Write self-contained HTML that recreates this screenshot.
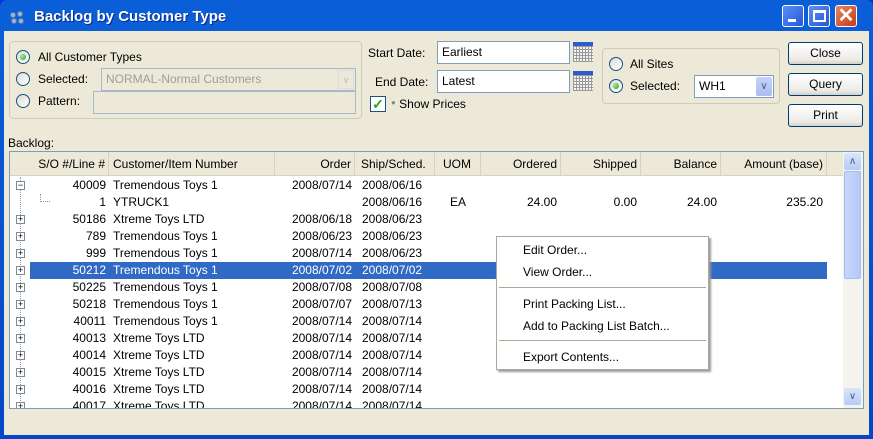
<!DOCTYPE html>
<html><head><style>
*{box-sizing:border-box;margin:0;padding:0}
body{width:873px;height:439px;overflow:hidden;font-family:"Liberation Sans",sans-serif;font-size:12px;color:#000;background:#0831d9}
.a{position:absolute;white-space:nowrap}
#win{position:absolute;left:0;top:0;width:873px;height:439px;background:linear-gradient(#0a5fd8,#0447c9);border-radius:7px 7px 0 0}
.title{left:34px;top:8px;color:#fff;font-weight:bold;font-size:15px;text-shadow:1px 1px #0a2a8a}
.tb{position:absolute;top:5px;width:22px;height:22px;border:1px solid #fff;border-radius:3px;background:linear-gradient(135deg,#5d8ef5,#2258d8)}
.grp{position:absolute;border:1px solid #cfcbb8;border-radius:4px}
.rad{position:absolute;width:14px;height:14px;border-radius:50%;border:1px solid #1c5180;background:linear-gradient(135deg,#dcdcd4,#fff)}
.rad.on::after{content:"";position:absolute;left:3px;top:3px;width:6px;height:6px;border-radius:50%;background:radial-gradient(circle at 35% 35%,#9ef08a,#21a121)}
.fld{position:absolute;border:1px solid #7f9db9;background:#fff;padding:3px 0 0 4px}
.btn{position:absolute;width:75px;height:23px;border:1px solid #003c74;border-radius:3px;background:linear-gradient(#fff,#ecebe6 80%,#d6d0c5);text-align:center;line-height:21px}
.cal{position:absolute;width:20px;height:20px;background:repeating-linear-gradient(90deg,#999 0 1px,transparent 1px 3px),repeating-linear-gradient(0deg,#999 0 1px,#f4f4f4 1px 3px);border-top:4px solid #2a5cd0}
.r{position:absolute;left:0;width:833px;height:17px;line-height:17px}
.r span{position:absolute}
.c1{right:737px;text-align:right}
.c2{left:103px}
.c3{right:491px}
.c4{left:352px}
.pl{position:absolute;left:6px;top:4px;width:9px;height:9px;border:1px solid #7a8a99;background:#fff;font-size:9px;line-height:7px;text-align:center;color:#000}
.hd{position:absolute;top:0;height:24px;line-height:24px;border-right:1px solid #d6d2c2}
.mi{position:absolute;left:26px}
</style></head><body>
<div id="win">
<svg class="a" style="left:9px;top:11px" width="16" height="14"><g fill="#9db4d8" stroke="#5a7aa8"><circle cx="4" cy="4" r="2.5"/><circle cx="11" cy="3" r="2.5"/><circle cx="5" cy="10" r="2.5"/><circle cx="12" cy="10" r="2.5"/></g></svg>
<div class="a title">Backlog by Customer Type</div>
<div class="tb" style="left:782px"><div style="position:absolute;left:5px;top:13px;width:8px;height:3px;background:#fff"></div></div>
<div class="tb" style="left:808px"><div style="position:absolute;left:4px;top:4px;width:13px;height:12px;border:2px solid #fff;border-top-width:3px"></div></div>
<div class="tb" style="left:835px;background:linear-gradient(135deg,#e8855e,#c63d17)"><div style="position:absolute;left:0;top:0;width:20px;height:20px;color:#fff;font-size:20px;line-height:20px;text-align:center;font-weight:bold">✕</div></div>
</div>
<div style="position:absolute;left:4px;top:31px;width:865px;height:404px;background:#ECE9D8"></div>
<div class="grp" style="left:9px;top:41px;width:353px;height:78px"></div>
<div class="rad on" style="left:16px;top:50px"></div><div class="a" style="left:38px;top:50px">All Customer Types</div>
<div class="rad" style="left:16px;top:72px"></div><div class="a" style="left:38px;top:72px">Selected:</div>
<div class="rad" style="left:16px;top:94px"></div><div class="a" style="left:38px;top:94px">Pattern:</div>
<div class="fld" style="left:101px;top:68px;width:255px;height:23px;background:#ECE9D8;color:#a09e94;border-color:#a9b7c9">NORMAL-Normal Customers<div style="position:absolute;right:1px;top:1px;width:16px;height:19px;border:1px solid #ddd;color:#bbb;text-align:center;font-size:9px;line-height:19px">&#8744;</div></div>
<div class="fld" style="left:93px;top:91px;width:263px;height:23px;background:#ECE9D8;border-color:#a9b7c9"></div>
<div class="a" style="left:368px;top:46px">Start Date:</div>
<div class="fld" style="left:437px;top:41px;width:133px;height:23px">Earliest</div>
<div class="cal" style="left:573px;top:42px"></div>
<div class="a" style="left:375px;top:75px">End Date:</div>
<div class="fld" style="left:437px;top:70px;width:133px;height:23px">Latest</div>
<div class="cal" style="left:573px;top:71px"></div>
<div style="position:absolute;left:370px;top:96px;width:16px;height:16px;border:1px solid #1c5180;background:#fff;color:#21a121;font-weight:bold;font-size:14px;line-height:14px;text-align:center">✓</div>
<div class="a" style="left:391px;top:97px"><span style="font-size:8px;color:#888;vertical-align:3px">●</span> Show Prices</div>
<div class="grp" style="left:602px;top:48px;width:178px;height:56px"></div>
<div class="rad" style="left:609px;top:57px"></div><div class="a" style="left:630px;top:57px">All Sites</div>
<div class="rad on" style="left:609px;top:79px"></div><div class="a" style="left:630px;top:79px">Selected:</div>
<div class="fld" style="left:694px;top:75px;width:80px;height:23px">WH1<div style="position:absolute;right:1px;top:1px;width:16px;height:19px;background:linear-gradient(#c6d3f7,#a8bdf0);color:#4d6185;text-align:center;font-size:10px;line-height:19px;border-radius:2px">&#8744;</div></div>
<div class="btn" style="left:788px;top:42px">Close</div>
<div class="btn" style="left:788px;top:73px">Query</div>
<div class="btn" style="left:788px;top:104px">Print</div>
<div class="a" style="left:8px;top:136px">Backlog:</div>
<div style="position:absolute;left:9px;top:151px;width:855px;height:258px;border:1px solid #7f9db9;background:#fff;overflow:hidden">
 <div style="position:absolute;left:0;top:0;width:833px;height:24px;background:#ECE9D8;border-bottom:1px solid #d6d2c2">
  <div class="hd" style="left:0;width:99px;text-align:right;padding-right:3px">S/O #/Line #</div>
  <div class="hd" style="left:99px;width:166px;padding-left:4px">Customer/Item Number</div>
  <div class="hd" style="left:265px;width:80px;text-align:right;padding-right:3px">Order</div>
  <div class="hd" style="left:345px;width:80px;padding-left:6px">Ship/Sched.</div>
  <div class="hd" style="left:425px;width:46px;padding-left:8px">UOM</div>
  <div class="hd" style="left:471px;width:80px;text-align:right;padding-right:3px">Ordered</div>
  <div class="hd" style="left:551px;width:80px;text-align:right;padding-right:3px">Shipped</div>
  <div class="hd" style="left:631px;width:80px;text-align:right;padding-right:3px">Balance</div>
  <div class="hd" style="left:711px;width:106px;text-align:right;padding-right:3px">Amount (base)</div>
 </div>
 <div style="position:absolute;left:10px;top:25px;height:240px;border-left:1px dotted #999"></div>
 <div class="r" style="top:25px"><div class="pl">−</div><span class="c1">40009</span><span class="c2">Tremendous Toys 1</span><span class="c3">2008/07/14</span><span class="c4">2008/06/16</span></div>
 <div class="r" style="top:42px"><span style="left:30px;top:0;width:10px;height:8px;border-left:1px dotted #999;border-bottom:1px dotted #999"></span><span class="c1">1</span><span class="c2">YTRUCK1</span><span class="c4">2008/06/16</span><span style="left:440px">EA</span><span style="right:286px">24.00</span><span style="right:206px">0.00</span><span style="right:126px">24.00</span><span style="right:20px">235.20</span></div>
 <div class="r" style="top:59px"><div class="pl">+</div><span class="c1">50186</span><span class="c2">Xtreme Toys LTD</span><span class="c3">2008/06/18</span><span class="c4">2008/06/23</span></div>
 <div class="r" style="top:76px"><div class="pl">+</div><span class="c1">789</span><span class="c2">Tremendous Toys 1</span><span class="c3">2008/06/23</span><span class="c4">2008/06/23</span></div>
 <div class="r" style="top:93px"><div class="pl">+</div><span class="c1">999</span><span class="c2">Tremendous Toys 1</span><span class="c3">2008/07/14</span><span class="c4">2008/06/23</span></div>
 <div class="r" style="top:110px"><div style="position:absolute;left:20px;top:0;width:797px;height:17px;background:#316AC5"></div><div class="pl">+</div><span class="c1" style="color:#fff">50212</span><span class="c2" style="color:#fff">Tremendous Toys 1</span><span class="c3" style="color:#fff">2008/07/02</span><span class="c4" style="color:#fff">2008/07/02</span></div>
 <div class="r" style="top:127px"><div class="pl">+</div><span class="c1">50225</span><span class="c2">Tremendous Toys 1</span><span class="c3">2008/07/08</span><span class="c4">2008/07/08</span></div>
 <div class="r" style="top:144px"><div class="pl">+</div><span class="c1">50218</span><span class="c2">Tremendous Toys 1</span><span class="c3">2008/07/07</span><span class="c4">2008/07/13</span></div>
 <div class="r" style="top:161px"><div class="pl">+</div><span class="c1">40011</span><span class="c2">Tremendous Toys 1</span><span class="c3">2008/07/14</span><span class="c4">2008/07/14</span></div>
 <div class="r" style="top:178px"><div class="pl">+</div><span class="c1">40013</span><span class="c2">Xtreme Toys LTD</span><span class="c3">2008/07/14</span><span class="c4">2008/07/14</span></div>
 <div class="r" style="top:195px"><div class="pl">+</div><span class="c1">40014</span><span class="c2">Xtreme Toys LTD</span><span class="c3">2008/07/14</span><span class="c4">2008/07/14</span></div>
 <div class="r" style="top:212px"><div class="pl">+</div><span class="c1">40015</span><span class="c2">Xtreme Toys LTD</span><span class="c3">2008/07/14</span><span class="c4">2008/07/14</span></div>
 <div class="r" style="top:229px"><div class="pl">+</div><span class="c1">40016</span><span class="c2">Xtreme Toys LTD</span><span class="c3">2008/07/14</span><span class="c4">2008/07/14</span></div>
 <div class="r" style="top:246px"><div class="pl">+</div><span class="c1">40017</span><span class="c2">Xtreme Toys LTD</span><span class="c3">2008/07/14</span><span class="c4">2008/07/14</span></div>
 <div style="position:absolute;left:833px;top:0;width:20px;height:256px;background:#f4f3ee">
  <div style="position:absolute;left:1px;top:1px;width:17px;height:17px;border-radius:2px;background:linear-gradient(#dbe5fb,#b7cbf5);color:#4d6185;text-align:center;font-size:10px;line-height:17px">&#8743;</div>
  <div style="position:absolute;left:1px;top:19px;width:17px;height:108px;border-radius:2px;background:linear-gradient(90deg,#c8d6fb,#b5c9f6);border:1px solid #a7bdf0"></div>
  <div style="position:absolute;left:1px;top:236px;width:17px;height:17px;border-radius:2px;background:linear-gradient(#dbe5fb,#b7cbf5);color:#4d6185;text-align:center;font-size:10px;line-height:17px">&#8744;</div>
 </div>
</div>
<div style="position:absolute;left:496px;top:236px;width:213px;height:134px;background:#fff;border:1px solid #aca899;box-shadow:2px 2px 2px #999">
 <div class="mi" style="top:6px">Edit Order...</div>
 <div class="mi" style="top:28px">View Order...</div>
 <div style="position:absolute;left:2px;top:50px;width:207px;border-top:1px solid #aca899"></div>
 <div class="mi" style="top:60px">Print Packing List...</div>
 <div class="mi" style="top:82px">Add to Packing List Batch...</div>
 <div style="position:absolute;left:2px;top:103px;width:207px;border-top:1px solid #aca899"></div>
 <div class="mi" style="top:113px">Export Contents...</div>
</div>
</body></html>
